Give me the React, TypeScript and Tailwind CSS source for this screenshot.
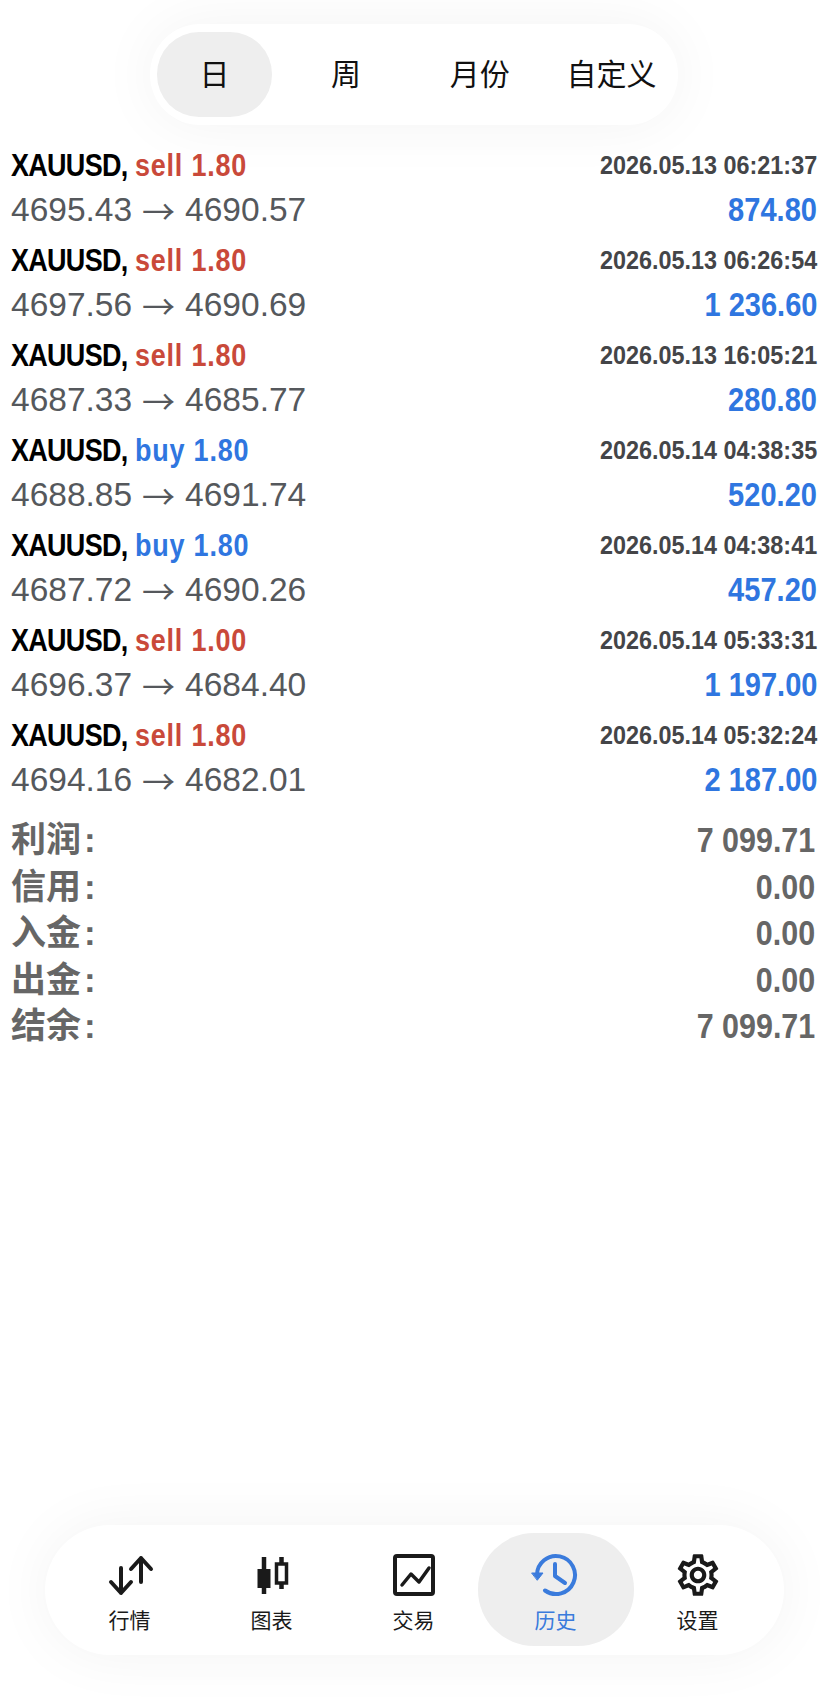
import React from 'react'
import { MdOutlineSettings } from 'react-icons/md'

const latin = "font-['Liberation_Sans','Noto_Sans_CJK_SC',sans-serif]"

type Deal = {
  side: 'sell' | 'buy'
  lots: string
  time: string
  open: string
  close: string
  profit: string
}

const deals: Deal[] = [
  { side: 'sell', lots: '1.80', time: '2026.05.13 06:21:37', open: '4695.43', close: '4690.57', profit: '874.80' },
  { side: 'sell', lots: '1.80', time: '2026.05.13 06:26:54', open: '4697.56', close: '4690.69', profit: '1 236.60' },
  { side: 'sell', lots: '1.80', time: '2026.05.13 16:05:21', open: '4687.33', close: '4685.77', profit: '280.80' },
  { side: 'buy', lots: '1.80', time: '2026.05.14 04:38:35', open: '4688.85', close: '4691.74', profit: '520.20' },
  { side: 'buy', lots: '1.80', time: '2026.05.14 04:38:41', open: '4687.72', close: '4690.26', profit: '457.20' },
  { side: 'sell', lots: '1.00', time: '2026.05.14 05:33:31', open: '4696.37', close: '4684.40', profit: '1 197.00' },
  { side: 'sell', lots: '1.80', time: '2026.05.14 05:32:24', open: '4694.16', close: '4682.01', profit: '2 187.00' },
]

const summary = [
  { label: '利润', value: '7 099.71' },
  { label: '信用', value: '0.00' },
  { label: '入金', value: '0.00' },
  { label: '出金', value: '0.00' },
  { label: '结余', value: '7 099.71' },
]

function DealRow({ deal }: { deal: Deal }): React.ReactElement {
  return (
    <div className="flex h-[95px] flex-col px-[11px]">
      <div className="flex h-[44px] items-center justify-between">
        <span className="inline-block origin-left scale-x-[.87] whitespace-nowrap text-[31px] font-bold text-black">
          <span className="tracking-[-0.8px]">XAUUSD,</span>{' '}
          <span className={`tracking-[0.9px] ${deal.side === 'sell' ? 'text-[#c9493a]' : 'text-[#2f76e0]'}`}>
            {deal.side} {deal.lots}
          </span>
        </span>
        <span className="inline-block origin-right scale-x-[.935] whitespace-nowrap text-[25px] font-bold text-[#444548]">
          {deal.time}
        </span>
      </div>
      <div className="flex h-[44px] items-center justify-between">
        <span className="flex items-center whitespace-nowrap text-[33.500px] text-[#55585c]">
          {deal.open}
          <span className="mx-[10px] font-['Noto_Sans_CJK_SC',sans-serif] text-[33px] leading-none">→</span>
          {deal.close}
        </span>
        <span className="inline-block origin-right scale-x-[.88] whitespace-nowrap text-[33px] font-bold text-[#2f76e0]">
          {deal.profit}
        </span>
      </div>
    </div>
  )
}

function MarketsIcon(): React.ReactElement {
  return (
    <svg width="60" height="44" viewBox="0 0 60 44" fill="none" stroke="#1a1a1a" strokeWidth="4" strokeLinecap="round" strokeLinejoin="round">
      <path d="M21 15v25M11 29l10 11 10-11" />
      <path d="M41 5v24M31 16 41 5l10 11" />
    </svg>
  )
}

function ChartIcon(): React.ReactElement {
  return (
    <svg width="60" height="44" viewBox="0 0 60 44" fill="none" stroke="#1a1a1a">
      <path d="M22 4v37" strokeWidth="4.500" />
      <rect x="15.500" y="16" width="13" height="19" fill="#1a1a1a" stroke="none" />
      <path d="M39.500 4v32" strokeWidth="4.500" />
      <rect x="34.500" y="11" width="10" height="19" fill="#fff" strokeWidth="3.500" />
    </svg>
  )
}

function TradeIcon(): React.ReactElement {
  return (
    <svg width="60" height="44" viewBox="0 0 60 44" fill="none" stroke="#1a1a1a" strokeWidth="4" strokeLinecap="round" strokeLinejoin="round">
      <rect x="11" y="3" width="38" height="38" rx="2" />
      <path d="M18 32l9-11 8 8 10-14" strokeWidth="3.500" />
    </svg>
  )
}

function HistoryIcon(): React.ReactElement {
  return (
    <svg width="60" height="44" viewBox="0 0 60 44" fill="none" stroke="#3a7bdc" strokeWidth="4" strokeLinecap="round" strokeLinejoin="round">
      <path d="M11 22A19 19 0 1 1 19 37.500" />
      <path d="M6 20h11l-5.500 7z" fill="#3a7bdc" strokeWidth="1" />
      <path d="M29 11v12l10 7" />
    </svg>
  )
}

const navItems = [
  { label: '行情', icon: <MarketsIcon /> },
  { label: '图表', icon: <ChartIcon /> },
  { label: '交易', icon: <TradeIcon /> },
  { label: '历史', icon: <HistoryIcon />, active: true },
  { label: '设置', icon: <MdOutlineSettings size={50} color="#1a1a1a" /> },
]

export default function App(): React.ReactElement {
  return (
    <div className={`flex h-[1699px] w-[828px] flex-col overflow-hidden bg-white ${latin}`}>
      {/* Period tabs */}
      <div className="mx-auto mt-[24px] flex h-[101px] w-[528px] items-center rounded-[50px] bg-white px-[7px] text-[30px] text-[#111] shadow-[0_0_60px_rgba(0,0,0,0.05)]">
        <div className="flex h-[85px] w-[116px] items-center justify-center rounded-[42px] bg-[#eeeeee]">日</div>
        <div className="ml-[2px] flex w-[146px] justify-center">周</div>
        <div className="ml-[1px] flex w-[122px] justify-center">月份</div>
        <div className="ml-3 flex w-[120px] justify-center whitespace-nowrap">自定义</div>
      </div>

      {/* Deals */}
      <div className="mt-[19px]">
        {deals.map((deal) => (
          <DealRow key={deal.time} deal={deal} />
        ))}
      </div>

      {/* Totals */}
      <div className="mt-[8px] px-[11px]">
        {summary.map((row) => (
          <div key={row.label} className="flex h-[46.600px] items-center justify-between text-[#666666]">
            <span className="whitespace-nowrap text-[35px] font-bold">
              {row.label}
              <span className="ml-[3px]">:</span>
            </span>
            <span className="mr-[2px] inline-block origin-right scale-x-[.87] whitespace-nowrap text-[35px] font-bold">{row.value}</span>
          </div>
        ))}
      </div>

      {/* Bottom navigation */}
      <div className="mx-auto mt-auto mb-[44px] flex h-[130px] w-[739px] rounded-[65px] bg-white pt-[8px] pl-[14px] shadow-[0_0_60px_rgba(0,0,0,0.05)]">
        {navItems.map((item) => (
          <div
            key={item.label}
            className={`flex h-[113px] flex-col items-center pt-[20px] ${
              item.active ? '-mx-[7px] w-[156px] rounded-[56px] bg-[#eeeeee] text-[#3a7bdc]' : 'w-[142px] text-[#1a1a1a]'
            }`}
          >
            <div className="flex h-[44px] items-center justify-center">{item.icon}</div>
            <div className="mt-[9px] text-[21px] leading-[30px]">{item.label}</div>
          </div>
        ))}
      </div>
    </div>
  )
}
